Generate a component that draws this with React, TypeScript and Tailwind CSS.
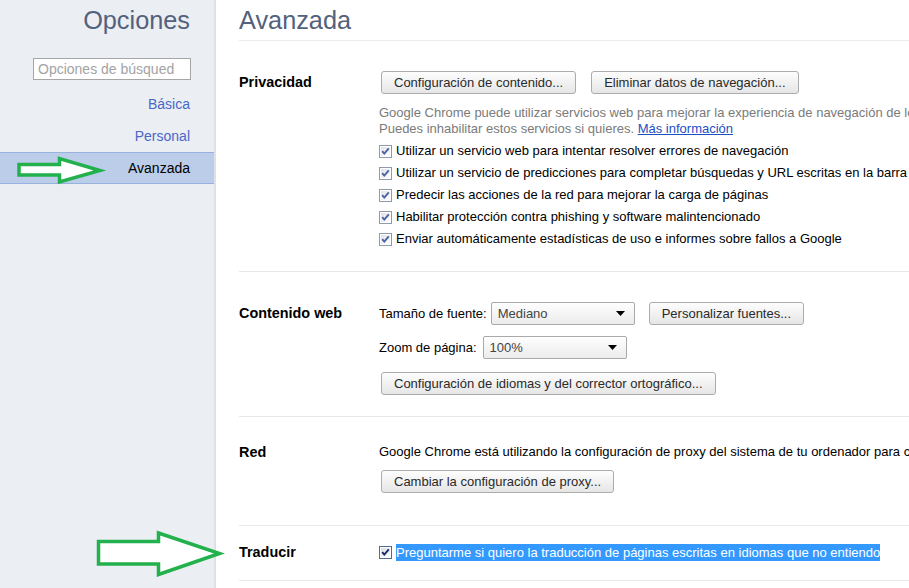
import React from "react";

const FONT = { fontFamily: '"Liberation Sans", Arial, sans-serif' };

function Check({ dark = false }: { dark?: boolean }) {
  return (
    <svg width="13" height="13" viewBox="0 0 13 13" className="shrink-0">
      <defs>
        <linearGradient id={dark ? "cbd" : "cbl"} x1="0" y1="0" x2="1" y2="1">
          <stop offset="0" stopColor={dark ? "#d8dde6" : "#dfe2e8"} />
          <stop offset="1" stopColor="#ffffff" />
        </linearGradient>
      </defs>
      <rect x="0.5" y="0.5" width="12" height="12" fill="#fff" stroke={dark ? "#4f6e8e" : "#8f9bab"} />
      <rect x="2" y="2" width="9" height="9" fill={`url(#${dark ? "cbd" : "cbl"})`} />
      <polyline
        points="3.2,6.2 5.3,8.6 9.8,3.4"
        fill="none"
        stroke={dark ? "#1b2a6b" : "#4f64a3"}
        strokeWidth="2"
      />
    </svg>
  );
}

function Button({ children }: { children: React.ReactNode }) {
  return (
    <div className="h-[23px] px-[12px] border border-[#acacac] rounded-[3px] bg-gradient-to-b from-[#fdfdfd] to-[#e6e6e6] flex items-center text-[13px] text-[#2a2a2a] whitespace-nowrap shrink-0">
      {children}
    </div>
  );
}

function Select({ value }: { value: string }) {
  return (
    <div className="w-[144px] h-[23px] border border-[#aaaaaa] rounded-[2px] bg-gradient-to-b from-[#fefefe] to-[#ececec] flex items-center justify-between pl-[6px] pr-[9px] text-[13px] text-[#444] shrink-0">
      <span>{value}</span>
      <svg width="9" height="5" viewBox="0 0 9 5">
        <polygon points="0,0 9,0 4.5,5" fill="#000" />
      </svg>
    </div>
  );
}

function CheckRow({ children }: { children: React.ReactNode }) {
  return (
    <div className="h-[22px] flex items-center gap-[4px] whitespace-nowrap text-[13px] text-black">
      <Check />
      <span>{children}</span>
    </div>
  );
}

function Label({ children, lh }: { children: React.ReactNode; lh: string }) {
  return (
    <div className={`w-[140px] shrink-0 font-bold text-[14.4px] text-black ${lh}`}>{children}</div>
  );
}

export default function App() {
  return (
    <div className="relative w-[909px] h-[588px] overflow-hidden flex bg-white" style={FONT}>
      {/* Sidebar */}
      <div className="w-[216px] shrink-0 bg-[#ebeef3] border-r-2 border-[#dde1e7] flex flex-col">
        <div className="pt-[5px] pr-[24px] text-right text-[25.3px] leading-[30px] text-[#53627c]">Opciones</div>
        <div className="mt-[23px] ml-[33px] mr-[23px] h-[22px] border border-[#a6a6a6] bg-white flex items-center px-[4px] text-[14px] text-[#a3a3a3] overflow-hidden whitespace-nowrap">
          Opciones de búsqued
        </div>
        <div className="mt-[8px] flex flex-col">
          <div className="h-[32px] flex items-center justify-end pr-[24px] text-[14px] text-[#4a67c8]">Básica</div>
          <div className="h-[32px] flex items-center justify-end pr-[24px] text-[14px] text-[#4a67c8]">Personal</div>
          <div className="h-[32px] flex items-center justify-end pr-[24px] text-[14px] text-black bg-[#bbcde9] border-y border-[#97b2de]">
            Avanzada
          </div>
        </div>
      </div>

      {/* Main */}
      <div className="flex-1 min-w-0 pl-[23px] flex flex-col overflow-hidden">
        <div className="pt-[5px] pb-[5px] border-b border-[#ececec] text-[25.3px] leading-[30px] text-[#53627c]">
          Avanzada
        </div>

        {/* Privacidad */}
        <div className="flex pt-[30px] pb-[21px] border-b border-[#e8e8e8]">
          <Label lh="leading-[23px]">Privacidad</Label>
          <div className="flex flex-col">
            <div className="flex gap-[15px] ml-[2px]">
              <Button>Configuración de contenido...</Button>
              <Button>Eliminar datos de navegación...</Button>
            </div>
            <div className="mt-[11px] text-[13px] leading-[16px] text-[#7a7a7a] whitespace-nowrap">
              <div>Google Chrome puede utilizar servicios web para mejorar la experiencia de navegación de los usuarios.</div>
              <div>
                Puedes inhabilitar estos servicios si quieres.{" "}
                <span className="text-[#1c4fc4] underline">Más información</span>
              </div>
            </div>
            <div className="mt-[3px] flex flex-col">
              <CheckRow>Utilizar un servicio web para intentar resolver errores de navegación</CheckRow>
              <CheckRow>Utilizar un servicio de predicciones para completar búsquedas y URL escritas en la barra de direcciones</CheckRow>
              <CheckRow>Predecir las acciones de la red para mejorar la carga de páginas</CheckRow>
              <CheckRow>Habilitar protección contra phishing y software malintencionado</CheckRow>
              <CheckRow>Enviar automáticamente estadísticas de uso e informes sobre fallos a Google</CheckRow>
            </div>
          </div>
        </div>

        {/* Contenido web */}
        <div className="flex pt-[30px] pb-[21px] border-b border-[#e8e8e8]">
          <Label lh="leading-[23px]">Contenido web</Label>
          <div className="flex flex-col">
            <div className="flex items-center whitespace-nowrap text-[13px] text-black">
              <span className="mr-[4px]">Tamaño de fuente:</span>
              <Select value="Mediano" />
              <div className="ml-[14px]">
                <Button>Personalizar fuentes...</Button>
              </div>
            </div>
            <div className="mt-[11px] flex items-center whitespace-nowrap text-[13px] text-black">
              <span className="mr-[6px]">Zoom de página:</span>
              <Select value="100%" />
            </div>
            <div className="mt-[13px] ml-[2px] flex">
              <Button>Configuración de idiomas y del corrector ortográfico...</Button>
            </div>
          </div>
        </div>

        {/* Red */}
        <div className="flex pt-[27px] pb-[32px] border-b border-[#e8e8e8]">
          <Label lh="leading-[16px]">Red</Label>
          <div className="flex flex-col">
            <div className="text-[13px] leading-[16px] text-black whitespace-nowrap">
              Google Chrome está utilizando la configuración de proxy del sistema de tu ordenador para conectarse a la red.
            </div>
            <div className="mt-[10px] ml-[2px] flex">
              <Button>Cambiar la configuración de proxy...</Button>
            </div>
          </div>
        </div>

        {/* Traducir */}
        <div className="flex pt-[15px] pb-[17px] border-b border-[#e8e8e8]">
          <Label lh="leading-[22px]">Traducir</Label>
          <div className="h-[22px] flex items-center gap-[4px] whitespace-nowrap text-[13px]">
            <Check dark />
            <span className="bg-[#3399ff] text-white leading-[17px]">
              Preguntarme si quiero la traducción de páginas escritas en idiomas que no entiendo
            </span>
          </div>
        </div>
      </div>

      {/* Green arrows overlay */}
      <svg className="absolute left-0 top-0 pointer-events-none" width="909" height="588" viewBox="0 0 909 588">
        <polygon
          points="19,164.5 59.5,164.5 59.5,158.5 100,170.5 59.5,182 59.5,175 19,175"
          fill="#fff"
          stroke="#22b14c"
          strokeWidth="3.5"
          strokeLinejoin="miter"
        />
        <polygon
          points="98.5,541.5 158.5,541.5 158.5,533 219.5,553.5 158.5,574.5 158.5,564 98.5,564"
          fill="#fff"
          stroke="#22b14c"
          strokeWidth="3.5"
          strokeLinejoin="miter"
        />
      </svg>
    </div>
  );
}
